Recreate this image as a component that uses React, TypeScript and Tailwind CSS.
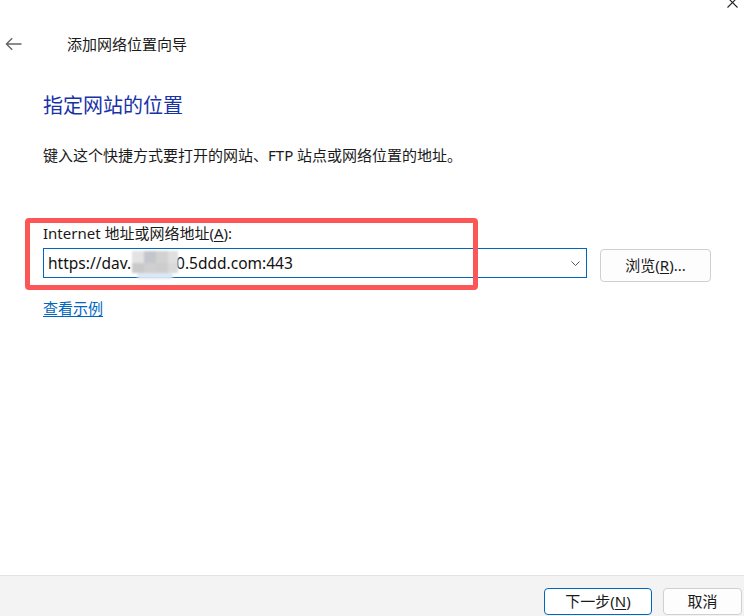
import React from "react";

const font = { fontFamily: '"Noto Sans", "Noto Sans CJK SC", sans-serif' };

export default function App() {
  return (
    <div
      className="relative flex h-[616px] w-[744px] flex-col overflow-hidden bg-white text-[#1a1a1a]"
      style={font}
    >
      {/* close glyph (window chrome, partially cropped) */}
      <svg className="absolute right-[6px] top-[-3px]" width="11" height="11" viewBox="0 0 11 11">
        <path d="M0.5 0.5 L10.5 10.5 M10.5 0.5 L0.5 10.5" stroke="#222" strokeWidth="1.1" fill="none" />
      </svg>

      {/* header row */}
      <div className="mt-[34px] flex h-[20px] items-center">
        <svg className="ml-[5px]" width="17" height="14" viewBox="0 0 17 14">
          <path d="M16.5 7 H1.5 M7.2 1.2 L1.4 7 L7.2 12.8" stroke="#666" strokeWidth="1.4" fill="none" />
        </svg>
        <span className="ml-[45px] text-[15px] leading-[20px] text-[#1a1a1a]">添加网络位置向导</span>
      </div>

      <div className="flex flex-col pl-[43px]">
        <div className="mt-[42px] text-[20px] leading-[20px] text-[#1832a8]">指定网站的位置</div>
        <div className="mt-[29px] text-[15px] leading-[20px]">
          键入这个快捷方式要打开的网站、FTP 站点或网络位置的地址。
        </div>

        <div className="mt-[58px] text-[15px] leading-[20px]">
          Internet 地址或网络地址(<span className="underline underline-offset-2">A</span>):
        </div>

        <div className="mt-[5px] flex items-start">
          <div className="relative flex h-[30px] w-[544px] shrink-0 items-center border border-[#0067c0] bg-white">
            <span className="ml-[4px] whitespace-nowrap text-[15.5px] leading-[20px] text-[#111]">
              https://dav.
              <span className="relative inline-block h-[10px] w-[45px]">
                <span className="absolute left-[1px] top-[-8px] flex h-[28px] w-[46px] flex-col blur-[1px]">
                  <span className="flex h-[12px]">
                    <span className="w-[12px] bg-[#e3e3e3]" />
                    <span className="w-[12px] bg-[#c3c6cc]" />
                    <span className="w-[12px] bg-[#d2d2d2]" />
                    <span className="w-[10px] bg-[#dfdfdf]" />
                  </span>
                  <span className="flex h-[10px]">
                    <span className="w-[12px] bg-[#c9c9c9]" />
                    <span className="w-[12px] bg-[#cfcfcf]" />
                    <span className="w-[12px] bg-[#cdcdcd]" />
                    <span className="w-[10px] bg-[#d9d9d9]" />
                  </span>
                  <span className="mx-[5px] h-[6px] rounded-full bg-[#dde8f4]" />
                </span>
              </span>
              0.5ddd.com:443
            </span>
            <svg className="absolute right-[6px] top-[12px]" width="9" height="5" viewBox="0 0 9 5">
              <path d="M0.5 0.5 L4.5 4.5 L8.5 0.5" stroke="#555" strokeWidth="1" fill="none" />
            </svg>
          </div>
          <button className="ml-[13px] mt-[1px] flex h-[33px] w-[111px] shrink-0 items-center justify-center rounded-[4px] border border-[#d0d0d0] bg-[#fdfdfd] text-[15px] text-[#1a1a1a]">
            浏览(<span className="underline underline-offset-2">R</span>)...
          </button>
        </div>

        <div className="mt-[16px] text-[15px] leading-[20px]">
          <span className="text-[#0067c0] underline underline-offset-2">查看示例</span>
        </div>
      </div>

      {/* annotation box */}
      <div className="pointer-events-none absolute left-[25px] top-[218px] h-[72px] w-[453px] rounded-[4px] border-[5px] border-[#fd5656]" />

      <div className="flex-1" />

      {/* footer */}
      <div className="flex h-[41px] items-start justify-end border-t border-[#e3e3e3] bg-[#f3f3f3] pr-[2px] pt-[12px]">
        <button className="flex h-[27px] w-[108px] items-center justify-center rounded-[4px] border border-[#0067c0] bg-white text-[15px] text-[#1a1a1a]">
          下一步(<span className="underline underline-offset-2">N</span>)
        </button>
        <button className="ml-[11px] flex h-[27px] w-[79px] items-center justify-center rounded-[4px] border border-[#d0d0d0] bg-[#fdfdfd] text-[15px] text-[#1a1a1a]">
          取消
        </button>
      </div>
    </div>
  );
}
